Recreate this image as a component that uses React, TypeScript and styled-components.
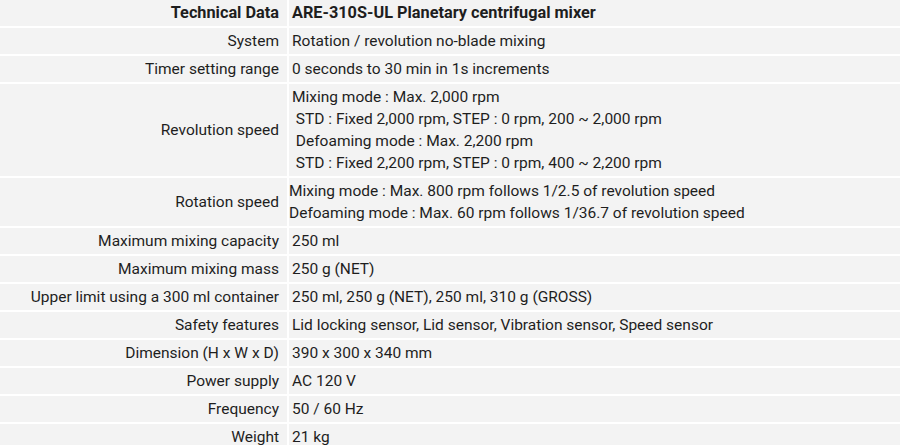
import React from 'react';
import styled, { createGlobalStyle } from 'styled-components';

const GlobalStyle = createGlobalStyle`
  html, body {
    margin: 0;
    padding: 0;
    background: #fff;
  }
  body {
    font-family: 'Roboto', 'Lato', sans-serif;
    color: #1e1e1e;
  }
`;

interface SpecRow {
  label: string;
  lines: string[];
  tight?: boolean;
}

const rows: SpecRow[] = [
  { label: 'System', lines: ['Rotation / revolution no-blade mixing'] },
  { label: 'Timer setting range', lines: ['0 seconds to 30 min in 1s increments'] },
  {
    label: 'Revolution speed',
    lines: [
      'Mixing mode : Max. 2,000 rpm',
      '\u00a0STD : Fixed 2,000 rpm, STEP : 0 rpm, 200 ~ 2,000 rpm',
      '\u00a0Defoaming mode : Max. 2,200 rpm',
      '\u00a0STD : Fixed 2,200 rpm, STEP : 0 rpm, 400 ~ 2,200 rpm',
    ],
  },
  {
    label: 'Rotation speed',
    tight: true,
    lines: [
      'Mixing mode : Max. 800 rpm follows 1/2.5 of revolution speed',
      'Defoaming mode : Max. 60 rpm follows 1/36.7 of revolution speed',
    ],
  },
  { label: 'Maximum mixing capacity', lines: ['250 ml'] },
  { label: 'Maximum mixing mass', lines: ['250 g (NET)'] },
  { label: 'Upper limit using a 300 ml container', lines: ['250 ml, 250 g (NET), 250 ml, 310 g (GROSS)'] },
  { label: 'Safety features', lines: ['Lid locking sensor, Lid sensor, Vibration sensor, Speed sensor'] },
  { label: 'Dimension (H x W x D)', lines: ['390 x 300 x 340 mm'] },
  { label: 'Power supply', lines: ['AC 120 V'] },
  { label: 'Frequency', lines: ['50 / 60 Hz'] },
  { label: 'Weight', lines: ['21 kg'] },
];

const SpecTable = styled.table`
  table-layout: fixed;
  border-collapse: separate;
  border-spacing: 2px;
  margin: -2px 0 0 -2px;
  width: calc(100% + 4px);
  font-size: 15.5px;
  line-height: 22px;
`;

const LabelCol = styled.col`
  width: 287px;
`;

const LabelCell = styled.th<{ $bold?: boolean }>`
  background: #f3f3f3;
  text-align: right;
  vertical-align: middle;
  padding: 2px 8px 2px 0;
  font-size: ${(p) => (p.$bold ? '16.3px' : 'inherit')};
  font-weight: ${(p) => (p.$bold ? 700 : 400)};
  white-space: nowrap;
  overflow: hidden;
`;

const ValueCell = styled.td<{ $bold?: boolean; $tight?: boolean }>`
  background: #f3f3f3;
  text-align: left;
  vertical-align: middle;
  padding: 2px 0 2px ${(p) => (p.$tight ? '0' : '3px')};
  font-size: ${(p) => (p.$bold ? '16.3px' : 'inherit')};
  font-weight: ${(p) => (p.$bold ? 700 : 400)};
  white-space: nowrap;
`;

const Line = styled.div`
  white-space: pre;
`;

export default function App() {
  return (
    <>
      <GlobalStyle />
      <SpecTable>
        <colgroup>
          <LabelCol />
          <col />
        </colgroup>
        <tbody>
          <tr>
            <LabelCell $bold>Technical Data</LabelCell>
            <ValueCell $bold>ARE-310S-UL Planetary centrifugal mixer</ValueCell>
          </tr>
          {rows.map((row) => (
            <tr key={row.label}>
              <LabelCell>{row.label}</LabelCell>
              <ValueCell $tight={row.tight}>
                {row.lines.map((line, i) => (
                  <Line key={i}>{line}</Line>
                ))}
              </ValueCell>
            </tr>
          ))}
        </tbody>
      </SpecTable>
    </>
  );
}
